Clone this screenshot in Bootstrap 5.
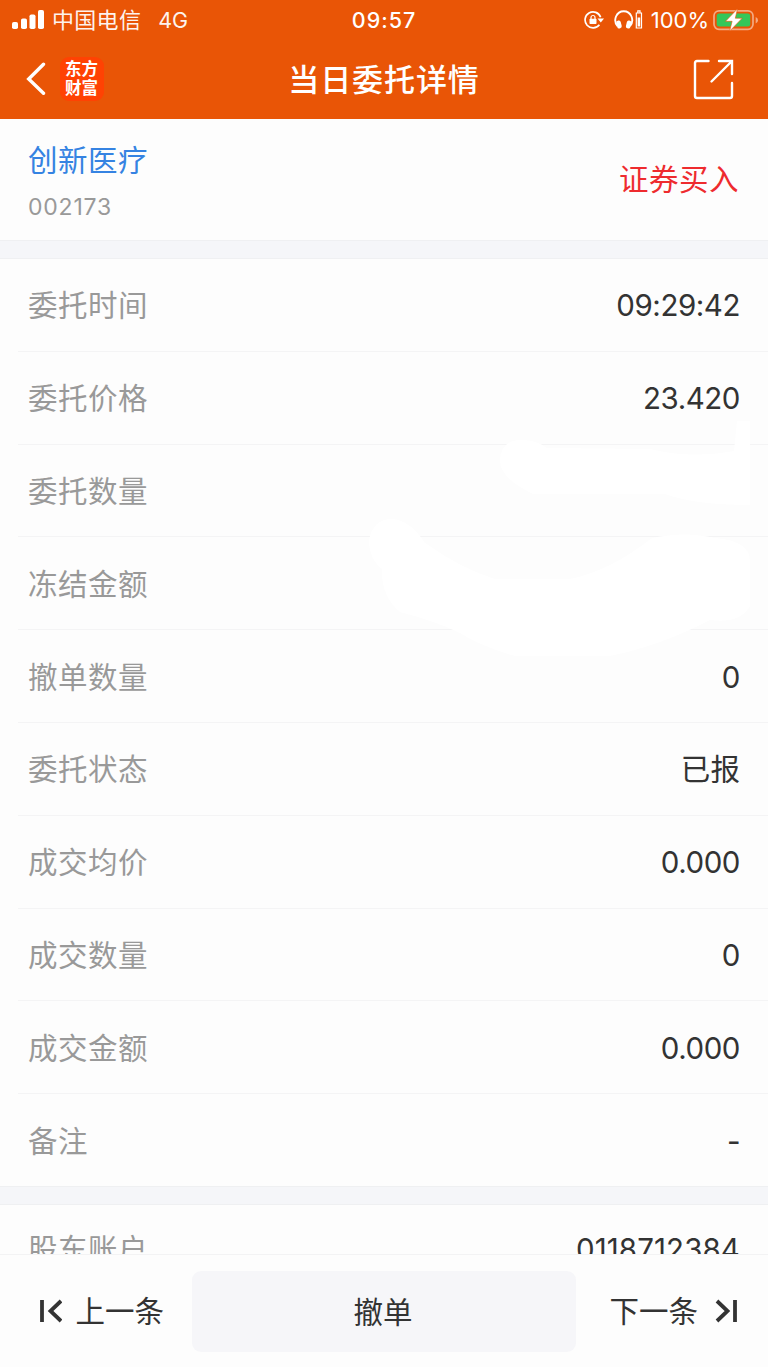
<!DOCTYPE html>
<html lang="zh-CN">
<head>
<meta charset="utf-8">
<meta name="viewport" content="width=device-width, initial-scale=1">
<title>当日委托详情</title>
<link href="https://cdn.jsdelivr.net/npm/bootstrap@5.3.0/dist/css/bootstrap.min.css" rel="stylesheet">
<style>
  body { font-family: Inter, "Noto Sans CJK SC", sans-serif; background: #fdfdfd; color: #333; font-size: 29.5px; line-height: 40px; }
  .screen { height: 1367px; }
  .top-area { background: #e95506; height: 119px; }
  .status-line { height: 40px; font-size: 22px; line-height: 40px; padding: 0 10px 0 12px; }
  .status-line svg, .title-line svg, .step svg { display: block; flex: none; }
  .carrier { margin-left: 8px; letter-spacing: .3px; opacity: .93; }
  .net { margin-left: 17px; font-size: 21.5px; opacity: .93; }
  .clock { font-size: 21.5px; font-weight: 500; letter-spacing: .95px; }
  .title-line { height: 79px; padding: 0 34px 0 26px; }
  .page-name { font-size: 31px; letter-spacing: .9px; font-weight: 500; line-height: 77px; }
  .brand-tile { width: 44px; height: 44px; margin: -2px 0 0 14px; border-radius: 9px; background: #ff4203; font: 700 16.5px/18.5px "Noto Sans CJK SC", sans-serif; padding: 0 1px 2px 0; }
  .stock-head { height: 121px; padding: 3px 28px 0; }
  .stock-name { color: #3583e2; letter-spacing: .5px; }
  .stock-code { color: #999; font-size: 23px; line-height: 30px; letter-spacing: .8px; margin-top: 12px; }
  .side { color: #ee2b2e; letter-spacing: .5px; margin: 0 1px 5px 0; }
  .gap-band { height: 19px; background: #f5f6f9; border-top: 1px solid #eff0f2; border-bottom: 1px solid #eff0f2; }
  .detail { height: 92.8px; margin-left: 18px; padding: 1px 28px 0 10px; border-bottom: 1px solid #f4f4f5; }
  main .last-detail { height: 92px; border-bottom: 0; }
  .detail-key { color: #999; letter-spacing: .5px; }
  .detail-val { letter-spacing: -.45px; }
  .account { letter-spacing: .1px; }
  .wipe { left: 340px; top: 162px; pointer-events: none; }
  .cut-off { height: 49px; }
  .cut-off .detail { height: 87px; }
  .bottom-bar { height: 113px; padding: 16px 30px 0 38px; background: #fdfdfd; border-top: 1px solid #f3f3f4; }
  .step { width: 126px; height: 80px; }
  .step-next { width: 129px; }
  .cancel { width: 384px; height: 81px; margin-left: 28px; border-radius: 9px; background: #f6f6f9; color: #333; border: 0; font-size: 29.5px; padding: 0 2px 0 0; }
</style>
</head>
<body>
<div class="screen d-flex flex-column overflow-hidden">
  <header class="top-area text-white flex-shrink-0">
    <div class="status-line d-flex align-items-center position-relative">
      <svg width="32" height="20" viewBox="0 0 32 20" fill="#fff"><rect x="0" y="12" width="6" height="7" rx="1.8"/><rect x="9" y="8.500" width="6" height="10.500" rx="1.8"/><rect x="17.500" y="4.500" width="6" height="14.500" rx="1.8"/><rect x="26" y="0" width="6" height="19" rx="1.8"/></svg>
      <span class="carrier">中国电信</span><span class="net">4G</span>
      <span class="clock position-absolute start-50 translate-middle-x">09:57</span>
      <div class="d-flex align-items-center ms-auto">
        <svg width="20" height="18" viewBox="0 0 20 18" fill="none" stroke="#fff" stroke-width="1.700"><path d="M16.600 6.200A8 8 0 1 0 15.400 13.800"/><path d="M13.500 7.500h6.500l-3.200 4z" fill="#fff" stroke="none"/><rect x="5.500" y="7.800" width="7" height="5.200" rx=".7" fill="#fff" stroke="none"/><path d="M7 8V6.500a2 2 0 0 1 4 0V8" stroke-width="1.200"/></svg>
        <svg style="margin:-1px 7px 0 10px" width="30" height="21" viewBox="0 0 30 21" fill="none" stroke="#fff"><path d="M3.500 17C.8 14 .8 10.500 2 7.500C5 .5 14.500 .5 17.500 7.500C18.700 10.500 18.700 14 16 17" stroke-width="1.900"/><rect x="2.800" y="11.500" width="4.600" height="8" rx="2" fill="#fff" stroke="none" transform="rotate(-14 5 16)"/><rect x="12.200" y="11.500" width="4.600" height="8" rx="2" fill="#fff" stroke="none" transform="rotate(14 14.500 16)"/><path d="M22.300 4h5.200v15h-5.200zM23.800 4V1.800h2.200V4" stroke-width="1.200"/><path d="M23.600 8.500h2.600v9h-2.600z" fill="#fff" stroke="none"/></svg>
        <span class="percent">100%</span>
        <svg style="margin:-1px -1px 0 4px" width="46" height="24" viewBox="0 0 46 24"><rect x="1" y="2.800" width="39" height="18.500" rx="5" fill="none" stroke="#f4aa82" stroke-width="1.700"/><path d="M42.700 9v6.500q2.300-.8 2.300-3.200T42.700 9z" fill="#f4aa82"/><rect x="3.700" y="5.500" width="33.500" height="13" rx="2.500" fill="#34c759"/><path d="M24.500 .8L12.500 13.300h6.600L16.600 23.200 29.200 10.200h-6.900z" fill="#fff" stroke="#e95506" stroke-width=".6"/></svg>
      </div>
    </div>
    <div class="title-line d-flex align-items-center position-relative">
      <svg style="margin-top:-2px" width="20" height="34" viewBox="0 0 20 34" fill="none" stroke="#fff" stroke-width="3.400" stroke-linecap="round"><path d="M17.500 2.200L2.700 17l14.800 14.300"/></svg>
      <div class="brand-tile d-flex align-items-center justify-content-center text-center">东方<br>财富</div>
      <span class="page-name position-absolute start-50 translate-middle-x text-nowrap">当日委托详情</span>
      <svg class="ms-auto" width="41" height="41" viewBox="0 0 41 41" fill="none" stroke="#fff" stroke-width="2.400" stroke-linecap="round"><path d="M15.500 2H4Q2 2 2 4v33q0 2 2 2h33q2 0 2-2V24M26 2h13v13M38.500 2.500L18.500 22.500"/></svg>
    </div>
  </header>

  <section class="stock-head d-flex align-items-center justify-content-between flex-shrink-0">
    <div><div class="stock-name">创新医疗</div><div class="stock-code">002173</div></div>
    <div class="side">证券买入</div>
  </section>
  <div class="gap-band flex-shrink-0"></div>

  <main class="position-relative flex-shrink-0">
    <div class="detail d-flex align-items-center justify-content-between"><span class="detail-key">委托时间</span><span class="detail-val">09:29:42</span></div>
    <div class="detail d-flex align-items-center justify-content-between"><span class="detail-key">委托价格</span><span class="detail-val">23.420</span></div>
    <div class="detail d-flex align-items-center justify-content-between"><span class="detail-key">委托数量</span></div>
    <div class="detail d-flex align-items-center justify-content-between"><span class="detail-key">冻结金额</span></div>
    <div class="detail d-flex align-items-center justify-content-between"><span class="detail-key">撤单数量</span><span class="detail-val">0</span></div>
    <div class="detail d-flex align-items-center justify-content-between"><span class="detail-key">委托状态</span><span class="detail-val account">已报</span></div>
    <div class="detail d-flex align-items-center justify-content-between"><span class="detail-key">成交均价</span><span class="detail-val">0.000</span></div>
    <div class="detail d-flex align-items-center justify-content-between"><span class="detail-key">成交数量</span><span class="detail-val">0</span></div>
    <div class="detail d-flex align-items-center justify-content-between"><span class="detail-key">成交金额</span><span class="detail-val">0.000</span></div>
    <div class="detail last-detail d-flex align-items-center justify-content-between"><span class="detail-key">备注</span><span class="detail-val">-</span></div>
    <!-- white brush marks hiding the amounts -->
    <svg class="wipe position-absolute" width="428" height="240" viewBox="0 0 428 240" fill="#fff">
      <path d="M160 40Q160 20 180 19Q195 18 207 27L310 28Q350 38 394 30L397 0Q404-18 410 0V84Q355 84 325 73H193Q160 57 160 40z"/>
      <path d="M29 119Q33 98 52 98Q70 99 85 122Q120 147 155 158H230Q270 150 312 117Q345 110 375 117Q410 120 410 140V185Q400 203 370 199Q320 225 270 235H175Q140 225 120 212Q95 200 60 191Q41 175 42 148Q29 138 29 119z"/>
    </svg>
  </main>
  <div class="gap-band flex-shrink-0"></div>

  <div class="cut-off overflow-hidden flex-shrink-0">
    <div class="detail d-flex align-items-center justify-content-between"><span class="detail-key">股东账户</span><span class="detail-val account">0118712384</span></div>
  </div>
  <footer class="bottom-bar d-flex flex-shrink-0">
    <div class="step d-flex align-items-center"><svg width="24" height="24" viewBox="0 0 24 24" fill="none" stroke="#333" stroke-width="3.800"><path d="M4 1v22M23 2L12.500 12 23 22"/></svg><span class="ms-auto text-nowrap">上一条</span></div>
    <button class="btn cancel" type="button">撤单</button>
    <div class="step step-next ms-auto d-flex align-items-center justify-content-end"><span class="me-3 text-nowrap">下一条</span><svg width="24" height="24" viewBox="0 0 24 24" fill="none" stroke="#333" stroke-width="3.800"><path d="M21 1v22M3 2L13.500 12 3 22"/></svg></div>
  </footer>
</div>
<script src="https://cdn.jsdelivr.net/npm/bootstrap@5.3.0/dist/js/bootstrap.bundle.min.js"></script>
</body>
</html>
